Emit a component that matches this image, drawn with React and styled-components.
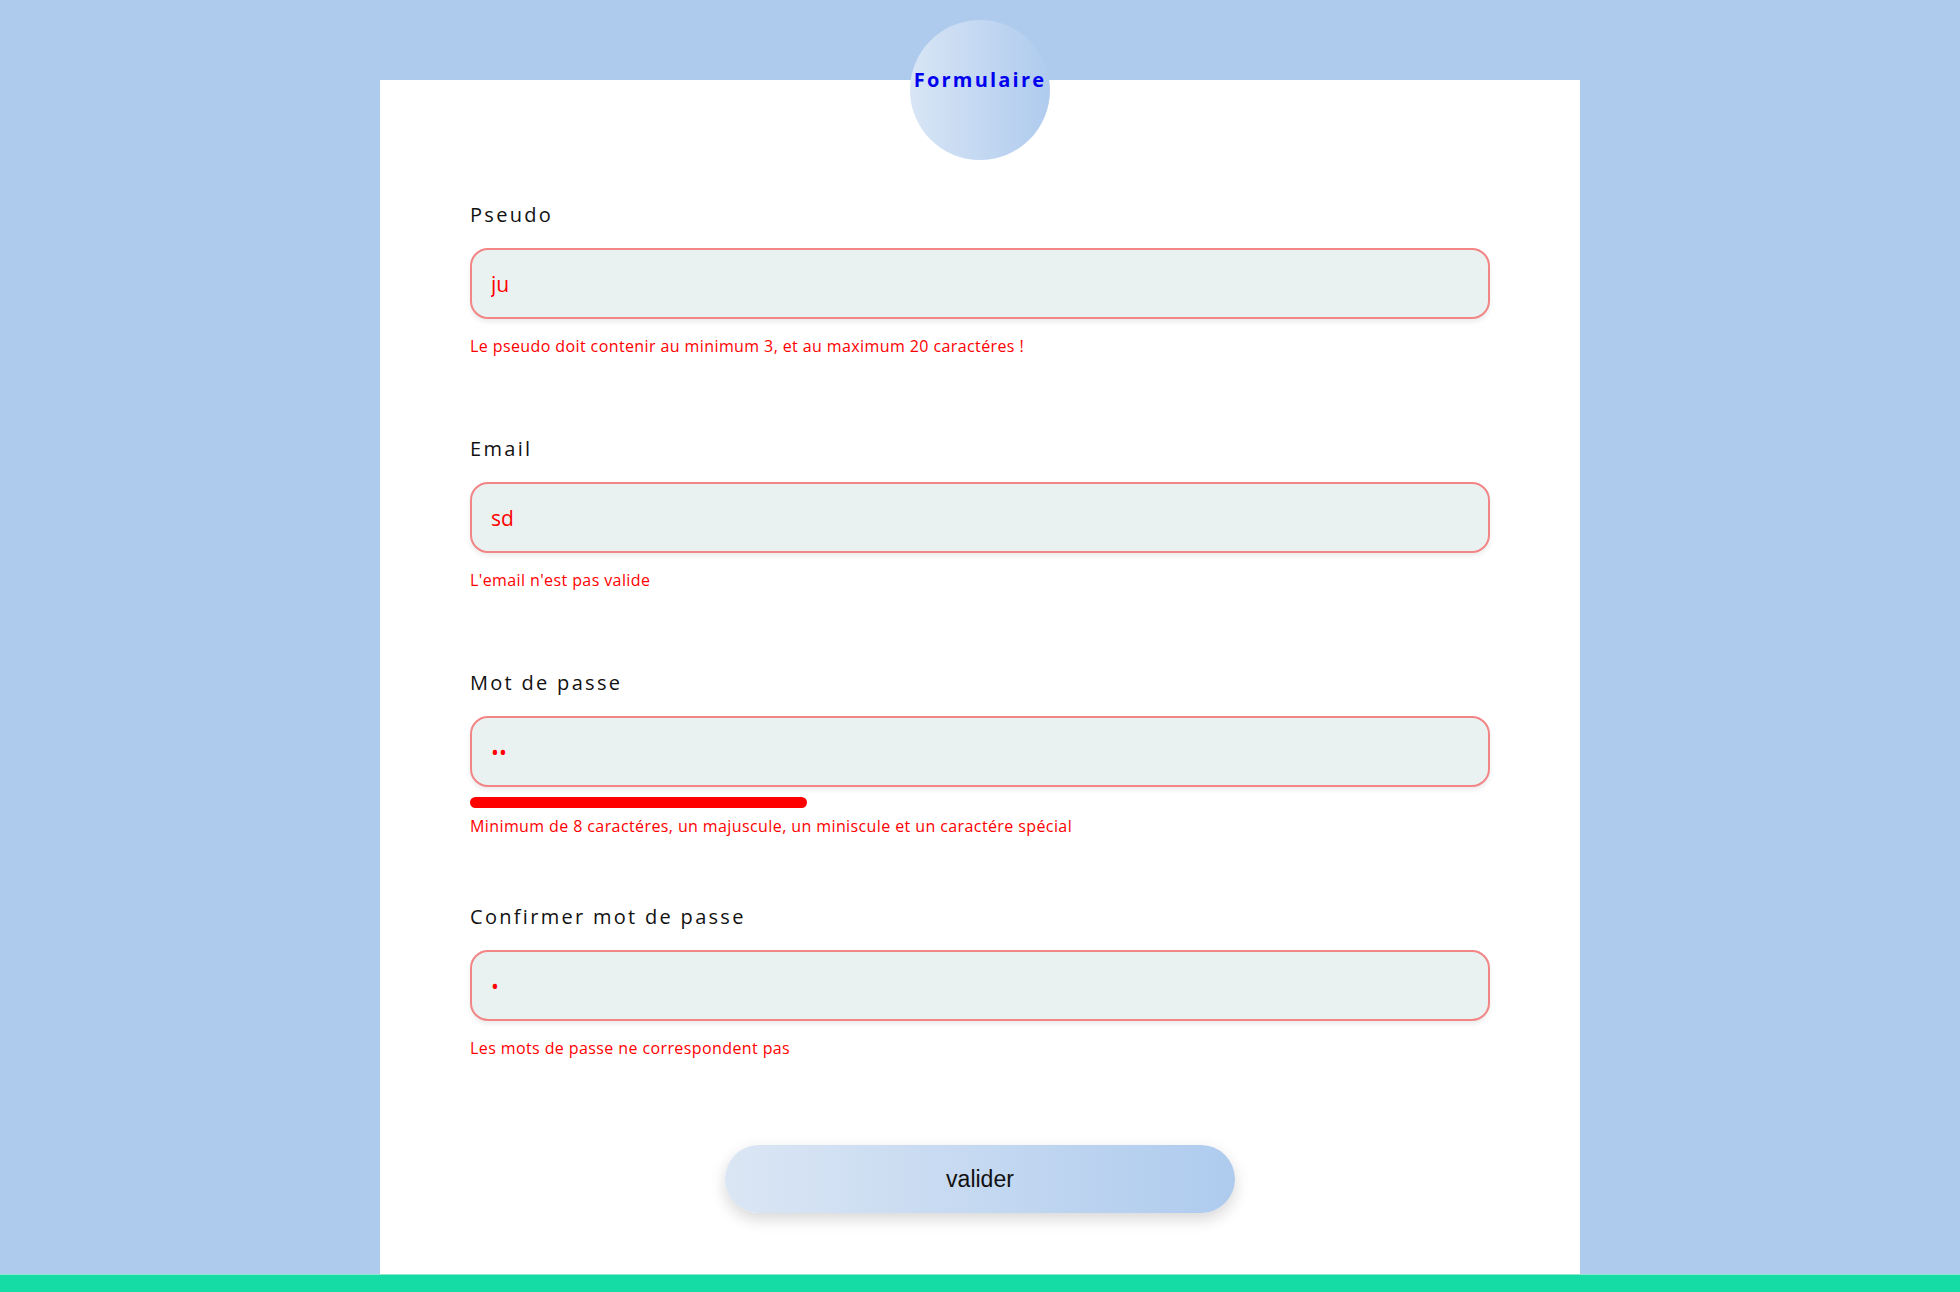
import React from "react";
import styled, { createGlobalStyle } from "styled-components";

const GlobalStyle = createGlobalStyle`
  html, body {
    margin: 0;
    padding: 0;
    background: #aecbee;
  }
  * { box-sizing: border-box; }
`;

const Page = styled.div`
  min-height: 1292px;
  display: flex;
  flex-direction: column;
`;

const Main = styled.main`
  flex: 1;
  display: flex;
  justify-content: center;
`;

const Card = styled.section`
  position: relative;
  width: 1200px;
  margin-top: 80px;
  background: #ffffff;
  padding: 123px 90px 61px;
`;

const Badge = styled.div`
  position: absolute;
  top: -60px;
  left: 50%;
  transform: translateX(-50%);
  width: 140px;
  height: 140px;
  border-radius: 50%;
  background: linear-gradient(to right, #d8e5f5, #afcbee);
  display: flex;
  align-items: center;
  justify-content: center;
  padding-bottom: 20px;
`;

const Title = styled.h1`
  margin: 0;
  font-family: "Open Sans", "DejaVu Sans", sans-serif;
  font-weight: 700;
  font-size: 20px;
  letter-spacing: 2.2px;
  color: #0000ee;
  line-height: 24px;
`;

const Form = styled.form`
  display: flex;
  flex-direction: column;
`;

const Field = styled.div`
  height: 234px;
  display: flex;
  flex-direction: column;
`;

const Label = styled.label`
  font-family: "Open Sans", "DejaVu Sans", sans-serif;
  font-size: 20px;
  line-height: 24px;
  letter-spacing: 2.3px;
  color: #111111;
  margin-bottom: 21px;
`;

const Input = styled.input`
  width: 100%;
  height: 71px;
  border: 2px solid #f28686;
  border-radius: 18px;
  background: #eaf2f1;
  padding: 0 19px;
  font-family: "Open Sans", "DejaVu Sans", sans-serif;
  font-size: 21px;
  color: #ff0000;
  outline: none;
  box-shadow: 0 3px 5px rgba(0, 0, 0, 0.08);
`;

const Strength = styled.div`
  margin-top: 10px;
  height: 11px;
  border-radius: 6px;
  background: #ff0000;
`;

const ErrorText = styled.p`
  margin: ${(p) => (p.$afterBar ? "9px" : "18px")} 0 0;
  font-family: "Open Sans", "DejaVu Sans", sans-serif;
  font-size: 16px;
  letter-spacing: 0.4px;
  line-height: 19px;
  color: #ff0000;
`;

const Submit = styled.button`
  align-self: center;
  width: 510px;
  height: 68px;
  margin-top: 6px;
  border: none;
  border-radius: 34px;
  background: linear-gradient(to right, #dbe6f4, #aecbee);
  box-shadow: 0 6px 16px rgba(0, 0, 0, 0.16);
  font-family: "Liberation Sans", Arial, sans-serif;
  font-size: 23px;
  color: #111111;
  cursor: pointer;
`;

const Footer = styled.footer`
  height: 18px;
  background: #14dca4;
  border-top: 1px solid #8fe6cc;
`;

const fields = [
  { id: "pseudo", label: "Pseudo", type: "text", value: "ju", error: "Le pseudo doit contenir au minimum 3, et au maximum 20 caractéres !" },
  { id: "email", label: "Email", type: "text", value: "sd", error: "L'email n'est pas valide" },
  { id: "password", label: "Mot de passe", type: "password", value: "ab", error: "Minimum de 8 caractéres, un majuscule, un miniscule et un caractére spécial", strength: 33 },
  { id: "confirm", label: "Confirmer mot de passe", type: "password", value: "a", error: "Les mots de passe ne correspondent pas" },
];

export default function App() {
  return (
    <>
      <GlobalStyle />
      <Page>
        <Main>
          <Card>
            <Badge>
              <Title>Formulaire</Title>
            </Badge>
            <Form onSubmit={(e) => e.preventDefault()}>
              {fields.map((f) => (
                <Field key={f.id}>
                  <Label htmlFor={f.id}>{f.label}</Label>
                  <Input id={f.id} type={f.type} value={f.value} readOnly />
                  {f.strength != null && <Strength style={{ width: `${f.strength}%` }} />}
                  <ErrorText $afterBar={f.strength != null}>{f.error}</ErrorText>
                </Field>
              ))}
              <Submit type="submit">valider</Submit>
            </Form>
          </Card>
        </Main>
        <Footer />
      </Page>
    </>
  );
}
